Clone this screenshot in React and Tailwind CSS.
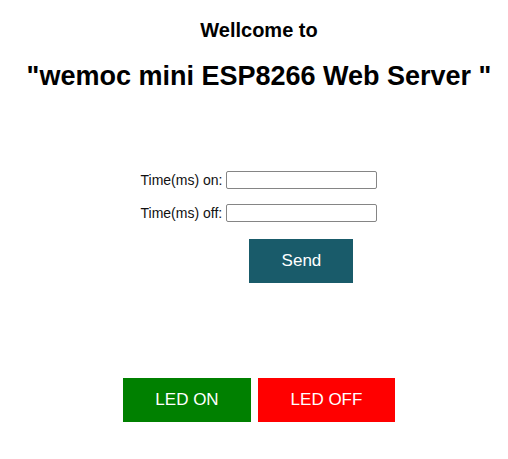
export default function App() {
  return (
    <main className="flex flex-col items-center bg-white pt-4 pb-8 pl-[10px] font-['Liberation_Sans',Arial,sans-serif] text-black">
      <h3 className="text-[20px] leading-7 font-bold">Wellcome to</h3>
      <h1 className="mt-3 text-[27px] leading-10 font-bold whitespace-nowrap">"wemoc mini ESP8266 Web Server "</h1>
      <form className="mt-[74px] flex flex-col" onSubmit={(e) => e.preventDefault()}>
        <div className="flex items-center gap-1 text-sm leading-5 text-[#111111]">
          <label htmlFor="on">Time(ms) on:</label>
          <input id="on" type="text" className="h-[18px] w-[151px] rounded-xs border border-[#858585] px-1" />
        </div>
        <div className="mt-[13px] flex items-center gap-1 text-sm leading-5 text-[#111111]">
          <label htmlFor="off">Time(ms) off:</label>
          <input id="off" type="text" className="h-[18px] w-[151px] rounded-xs border border-[#858585] px-1" />
        </div>
        <button type="submit" className="mt-4 mr-6 h-11 w-[104px] self-end bg-[#195b6a] text-[17px] text-white">Send</button>
      </form>
      <div className="mt-[95px] flex gap-[7px]">
        <button type="button" className="h-11 w-32 bg-[#008000] text-[17px] text-white">LED ON</button>
        <button type="button" className="h-11 w-[137px] bg-[#ff0000] text-[17px] text-white">LED OFF</button>
      </div>
    </main>
  );
}
